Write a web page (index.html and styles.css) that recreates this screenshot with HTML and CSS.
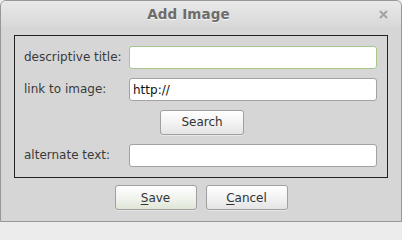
FILE: index.html
```html
<!DOCTYPE html>
<html>
<head>
<meta charset="utf-8">
<link rel="stylesheet" href="styles.css">
</head>
<body>
<div class="window">
  <div class="titlebar">
    <span class="title">Add Image</span>
    <svg class="close" width="9" height="9" viewBox="0 0 9 9"><path d="M1.5 1.5 L7.5 7.5 M7.5 1.5 L1.5 7.5" stroke="#a2a2a2" stroke-width="2" stroke-linecap="round"/></svg>
  </div>
  <div class="content">
    <div class="frame">
      <label class="label">descriptive title:</label>
      <div class="input focused"></div>
      <label class="label">link to image:</label>
      <div class="input">http://</div>
      <div class="search-row"><button class="btn search">Search</button></div>
      <label class="label">alternate text:</label>
      <div class="input"></div>
    </div>
    <div class="actions">
      <button class="btn default"><u>S</u>ave</button>
      <button class="btn"><u>C</u>ancel</button>
    </div>
  </div>
</div>
</body>
</html>
```
FILE: styles.css
```css
html, body {
  margin: 0;
  padding: 0;
  background: #ececec;
}
.window {
  box-sizing: border-box;
  width: 402px;
  height: 222px;
  border: 1px solid #979797;
  border-radius: 6px 6px 0 0;
  background: #d6d6d6;
  font-family: "DejaVu Sans", sans-serif;
  font-size: 12px;
  overflow: hidden;
}
.titlebar {
  height: 26px;
  position: relative;
  display: flex;
  align-items: center;
  justify-content: center;
  padding-right: 25px;
  background: linear-gradient(#e9e9e9, #d8d8d8);
}
.title {
  font-weight: bold;
  font-size: 13.5px;
  color: #6c6c6c;
  text-shadow: 0 1px 0 #f4f4f4;
  letter-spacing: 0.1px;
}
.close {
  position: absolute;
  right: 13px;
  top: 9px;
}
.content {
  padding: 8px 13px 0 13px;
}
.frame {
  border: 1px solid #222;
  padding: 10px 10px 10px 9px;
  display: grid;
  grid-template-columns: 105px 1fr;
  grid-template-rows: 23px 23px 25px 23px;
  row-gap: 9px;
  align-items: center;
}
.search-row {
  grid-column: 1 / 3;
  display: flex;
  justify-content: center;
  margin-top: -2px;
  margin-bottom: -1px;
  padding-left: 3px;
}
.label {
  color: #3a3a3a;
  padding-bottom: 1px;
}
.input {
  box-sizing: border-box;
  height: 23px;
  background: #fff;
  border: 1px solid #a2a2a2;
  border-radius: 3px;
  padding: 2px 3px 0 3px;
  color: #111;
  line-height: 18px;
}
.input.focused {
  border-color: #a5c98c;
}
.btn {
  box-sizing: border-box;
  height: 25px;
  font-family: "DejaVu Sans", sans-serif;
  font-size: 12px;
  color: #333;
  background: linear-gradient(#ffffff, #f3f3f3 50%, #e4e4e4);
  border: 1px solid #a0a0a0;
  border-radius: 3px;
  padding: 0;
  width: 83px;
  box-shadow: 0 1px 0 rgba(255,255,255,0.4);
}
.search {
  width: 84px;
}
.btn.default {
  background: linear-gradient(#ffffff, #f2f4ef 50%, #dfe6d6);
}
.btn u {
  text-underline-offset: 2px;
}
.actions {
  display: flex;
  justify-content: center;
  gap: 9px;
  margin-top: 7px;
}
.actions .btn {
  width: 82px;
}
```
